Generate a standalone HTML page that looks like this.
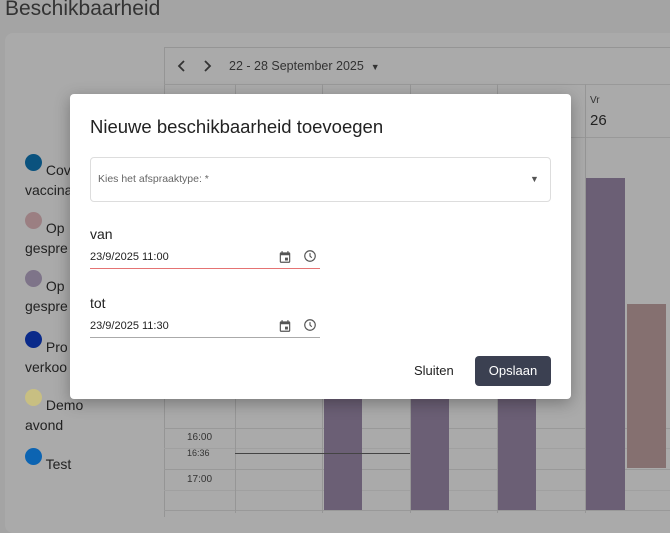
<!DOCTYPE html>
<html><head><meta charset="utf-8"><style>
*{box-sizing:border-box;margin:0;padding:0}
body{width:670px;height:513px;overflow:hidden;background:#a4a4a4;font-family:"Liberation Sans",sans-serif;position:relative;color:#222}
.abs{position:absolute}
.title{left:5px;top:-3px;font-size:21px;color:#333}
.card{left:5px;top:33px;width:680px;height:500px;background:#aaaaaa;border-radius:8px}
.cal{left:164px;top:47px;width:520px;height:470px;border-left:1px solid #959595;border-top:1px solid #959595}
.hl{height:1px;background:#999;left:164px;width:506px}
.vl{width:1px;background:#969696;top:84px;height:429px}
.bar{background:#6b5f75}
.leg{font-size:14px;color:#222;line-height:20px}
.dot{width:17px;height:17px;border-radius:50%;display:inline-block;vertical-align:4px}
.dlg{left:70px;top:94px;width:501px;height:305px;background:#fff;border-radius:4px;box-shadow:0 4px 16px rgba(0,0,0,.3)}
.ico{width:14px;height:14px}
</style></head><body>
<div class="abs title">Beschikbaarheid</div>
<div class="abs card"></div>
<div class="abs cal"></div>
<div class="abs hl" style="top:84px"></div>
<div class="abs hl" style="top:137px"></div>
<div class="abs hl" style="top:428px"></div>
<div class="abs hl" style="top:448px;background:#a0a0a0"></div>
<div class="abs hl" style="top:469px"></div>
<div class="abs hl" style="top:490px;background:#a0a0a0"></div>
<div class="abs hl" style="top:510px"></div>
<div class="abs vl" style="left:235px"></div>
<div class="abs vl" style="left:322px"></div>
<div class="abs vl" style="left:410px"></div>
<div class="abs vl" style="left:497px"></div>
<div class="abs vl" style="left:585px"></div>
<svg class="abs" style="left:175px;top:59px" width="40" height="14" viewBox="0 0 40 14"><path d="M9 2L4 7l5 5M30 2l5 5-5 5" fill="none" stroke="#333" stroke-width="1.8"/></svg>
<div class="abs" style="left:229px;top:59px;font-size:12.5px;color:#333">22 - 28 September 2025 &nbsp;<span style="font-size:9px">&#9660;</span></div>
<div class="abs" style="left:590px;top:95px;font-size:10px;color:#333">Vr</div>
<div class="abs" style="left:590px;top:112px;font-size:15px;color:#222">26</div>
<div class="abs bar" style="left:324px;top:178px;width:38px;height:332px"></div>
<div class="abs bar" style="left:411px;top:178px;width:38px;height:332px"></div>
<div class="abs bar" style="left:498px;top:178px;width:38px;height:332px"></div>
<div class="abs bar" style="left:586px;top:178px;width:39px;height:332px"></div>
<div class="abs" style="left:627px;top:304px;width:39px;height:164px;background:#857070"></div>
<div class="abs" style="left:235px;top:453px;width:175px;height:1px;background:#444"></div>
<div class="abs" style="left:187px;top:432px;font-size:10px;color:#333">16:00</div>
<div class="abs" style="left:187px;top:448px;font-size:9px;color:#333">16:36</div>
<div class="abs" style="left:187px;top:474px;font-size:10px;color:#333">17:00</div>
<div class="abs leg" style="left:25px;top:154px"><span class="dot" style="background:#0a527e"></span> Cov<br>vaccina</div>
<div class="abs leg" style="left:25px;top:212px"><span class="dot" style="background:#9b7f82"></span> Op<br>gespre</div>
<div class="abs leg" style="left:25px;top:270px"><span class="dot" style="background:#7e7489"></span> Op<br>gespre</div>
<div class="abs leg" style="left:25px;top:331px"><span class="dot" style="background:#0a2a8a"></span> Pro<br>verkoo</div>
<div class="abs leg" style="left:25px;top:389px"><span class="dot" style="background:#c8bf82"></span> Demo<br>avond</div>
<div class="abs leg" style="left:25px;top:448px"><span class="dot" style="background:#0c64b2"></span> Test</div>
<div class="abs dlg">
 <div class="abs" style="left:20px;top:22px;font-size:18.5px;color:#222">Nieuwe beschikbaarheid toevoegen</div>
 <div class="abs" style="left:20px;top:63px;width:461px;height:45px;border:1px solid #ddd;border-radius:4px"></div>
 <div class="abs" style="left:28px;top:79px;font-size:10.5px;color:#666">Kies het afspraaktype: *</div>
 <div class="abs" style="left:460px;top:80px;font-size:9px;color:#555">&#9660;</div>
 <div class="abs" style="left:20px;top:132px;font-size:14px;color:#222">van</div>
 <div class="abs" style="left:20px;top:157px;font-size:11px;color:#222">23/9/2025 11:00</div>
 <div class="abs" style="left:20px;top:174px;width:230px;height:1px;background:#e57373"></div>
 <div class="abs" style="left:20px;top:201px;font-size:14px;color:#222">tot</div>
 <div class="abs" style="left:20px;top:226px;font-size:11px;color:#222">23/9/2025 11:30</div>
 <div class="abs" style="left:20px;top:243px;width:230px;height:1px;background:#aaa"></div>
 <svg class="abs ico" style="left:208px;top:156px" viewBox="0 0 24 24"><path fill="#555" d="M19 4h-1V2h-2v2H8V2H6v2H5a2 2 0 0 0-2 2v14a2 2 0 0 0 2 2h14a2 2 0 0 0 2-2V6a2 2 0 0 0-2-2zm0 16H5V9h14zM12 13h5v5h-5z"/></svg>
 <svg class="abs ico" style="left:233px;top:155px" viewBox="0 0 24 24"><circle cx="12" cy="12" r="9" fill="none" stroke="#555" stroke-width="2"/><path d="M12 7v5l3 3" fill="none" stroke="#555" stroke-width="2"/></svg>
 <svg class="abs ico" style="left:208px;top:225px" viewBox="0 0 24 24"><path fill="#555" d="M19 4h-1V2h-2v2H8V2H6v2H5a2 2 0 0 0-2 2v14a2 2 0 0 0 2 2h14a2 2 0 0 0 2-2V6a2 2 0 0 0-2-2zm0 16H5V9h14zM12 13h5v5h-5z"/></svg>
 <svg class="abs ico" style="left:233px;top:224px" viewBox="0 0 24 24"><circle cx="12" cy="12" r="9" fill="none" stroke="#555" stroke-width="2"/><path d="M12 7v5l3 3" fill="none" stroke="#555" stroke-width="2"/></svg>
 <div class="abs" style="left:344px;top:269px;font-size:13px;color:#222">Sluiten</div>
 <div class="abs" style="left:405px;top:262px;width:76px;height:30px;background:#3b4051;border-radius:4px;color:#fff;font-size:13px;text-align:center;line-height:30px">Opslaan</div>
</div>
</body></html>
